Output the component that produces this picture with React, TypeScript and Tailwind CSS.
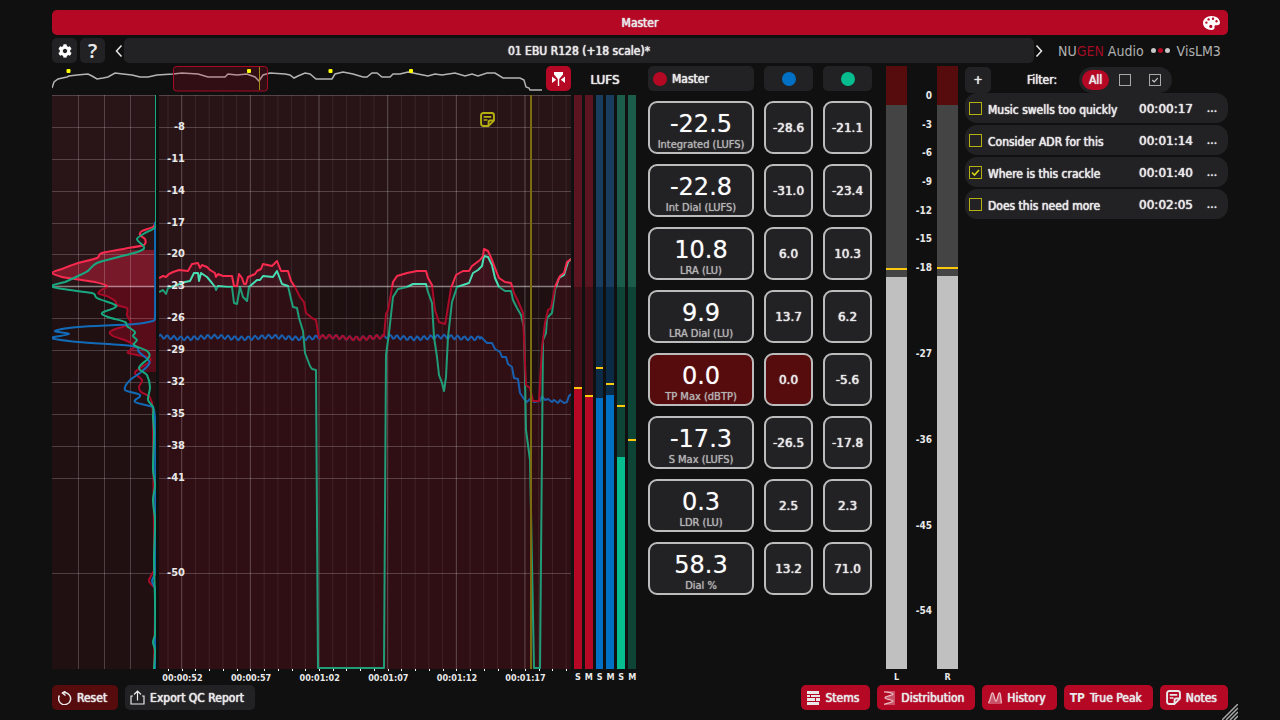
import { useState } from "react";
import { FaCog } from "react-icons/fa";

type Point = [number, number];

const MIN_LU = -59;
const MAX_LU = -5;
const CHART_TOP = 95;
const CHART_HEIGHT = 574;
const TARGET_Y = 287;

const LU_TICKS = [-8, -11, -14, -17, -20, -23, -26, -29, -32, -35, -38, -41, -50];
const TP_TICKS = [0, -3, -6, -9, -12, -15, -18, -27, -36, -45, -54];
const TIMES = ["00:00:52", "00:00:57", "00:01:02", "00:01:07", "00:01:12", "00:01:17"];
const SECONDS = Array.from({ length: 30 }, (_, i) => 168 + i * 13.73);

const OVERVIEW: Point[] = [
  [52, 88], [54, 82], [58, 79], [67, 77], [69, 76], [77, 75], [88, 74], [92, 76], [97, 79], [103, 78],
  [108, 77], [115, 73], [123, 74], [132, 75], [140, 77], [148, 77], [157, 75], [173, 74], [182, 73],
  [198, 74], [208, 77], [225, 77], [228, 74], [237, 75], [247, 74], [255, 77], [259, 81], [263, 75],
  [270, 73], [285, 74], [290, 75], [294, 78], [298, 76], [305, 73], [310, 74], [316, 79], [332, 79],
  [335, 74], [343, 72], [353, 74], [363, 77], [367, 77], [372, 73], [377, 73], [382, 77], [390, 77],
  [393, 74], [400, 74], [408, 72], [418, 74], [428, 76], [435, 74], [442, 75], [455, 73], [465, 76],
  [472, 74], [478, 76], [487, 73], [495, 73], [503, 78], [520, 78], [524, 80], [526, 87], [529, 88],
  [530, 90], [542, 90],
];

const MASTER: Point[] = [
  [159, 278], [163, 276], [166, 277], [169, 274], [173, 272], [179, 270], [188, 271], [192, 264],
  [198, 263], [200, 268], [202, 265], [207, 267], [210, 270], [215, 273], [216, 277], [218, 274],
  [223, 276], [232, 276], [234, 286], [237, 286], [239, 274], [242, 278], [244, 284], [246, 284],
  [248, 277], [255, 274], [257, 271], [261, 269], [263, 264], [272, 266], [277, 261], [281, 271],
  [288, 271], [291, 281], [295, 287], [300, 297], [304, 302], [306, 313], [312, 318], [316, 320],
  [319, 338],
];

const MASTER_AFTER: Point[] = [
  [384, 336], [386, 314], [388, 310], [393, 282], [397, 276], [407, 273], [417, 271], [426, 271],
  [428, 278], [432, 285], [435, 310], [439, 322], [445, 324], [447, 313], [451, 288], [456, 275],
  [463, 271], [469, 271], [472, 266], [480, 260], [483, 256], [484, 249], [488, 251], [492, 260],
  [495, 268], [499, 278], [505, 282], [511, 283], [514, 293], [518, 301], [523, 313], [525, 363],
  [526, 385], [530, 388], [533, 401], [539, 401], [542, 347], [545, 323], [548, 310], [551, 308],
  [555, 287], [560, 276], [564, 273], [567, 262], [571, 259],
];

const DIALOG: Point[] = [
  [159, 292], [163, 290], [166, 294], [168, 288], [177, 285], [185, 282], [190, 281], [194, 273],
  [198, 273], [199, 281], [201, 273], [207, 277], [212, 283], [215, 287], [216, 290], [218, 286],
  [227, 287], [232, 287], [234, 303], [237, 304], [240, 287], [243, 297], [247, 301], [249, 287],
  [257, 280], [260, 280], [263, 276], [273, 277], [277, 271], [282, 284], [288, 286], [291, 299],
  [293, 307], [297, 308], [299, 318], [303, 331], [305, 353], [310, 366], [312, 369], [316, 370],
  [318, 668], [384, 668], [386, 355], [389, 333], [393, 297], [398, 289], [407, 287], [413, 284],
  [426, 284], [428, 292], [432, 303], [434, 337], [437, 357], [439, 375], [442, 383], [444, 391],
  [446, 377], [448, 337], [452, 302], [457, 287], [469, 283], [473, 273], [478, 270], [482, 266],
  [484, 256], [488, 257], [492, 265], [495, 278], [499, 287], [505, 291], [511, 291], [513, 300],
  [517, 308], [521, 315], [524, 327], [526, 430], [530, 460], [534, 668], [540, 668], [543, 340],
  [546, 333], [547, 318], [552, 313], [555, 290], [559, 278], [564, 275], [568, 262], [571, 259],
];

const EFFECTS_TAIL: Point[] = [
  [481, 337], [484, 340], [487, 343], [492, 343], [495, 349], [500, 352], [502, 357], [506, 357],
  [508, 364], [512, 367], [514, 378], [518, 379], [520, 393], [524, 399], [527, 402], [530, 399],
  [534, 402], [540, 401], [542, 396], [545, 400], [548, 399], [552, 402], [554, 400], [558, 403],
  [560, 400], [564, 403], [567, 402], [569, 396], [571, 394],
];

const DIST_MASTER: Point[] = [
  [156, 221], [153, 227], [142, 231], [140, 235], [145, 239], [144, 245], [128, 248], [102, 253],
  [97, 258], [78, 263], [62, 269], [52, 273], [62, 277], [75, 279], [95, 282], [107, 286], [100, 291],
  [99, 294], [107, 296], [115, 301], [117, 305], [127, 308], [127, 315], [130, 324], [111, 331],
  [113, 336], [125, 340], [135, 346], [128, 353], [147, 357], [150, 361], [140, 368], [135, 373],
  [142, 380], [139, 387], [141, 392], [149, 396], [152, 403], [153, 417], [153, 433], [154, 570],
  [150, 578], [149, 581], [151, 584], [155, 588], [154, 669],
];

const DIST_DIALOG: Point[] = [
  [156, 226], [153, 229], [145, 233], [137, 239], [144, 247], [140, 251], [122, 256], [97, 263],
  [88, 271], [78, 276], [65, 282], [52, 286], [63, 289], [92, 293], [97, 298], [115, 305], [114, 308],
  [102, 313], [108, 317], [125, 322], [127, 326], [135, 332], [133, 336], [137, 340], [134, 345],
  [147, 351], [149, 357], [139, 368], [147, 375], [150, 387], [148, 400], [153, 407], [153, 417],
  [154, 433], [153, 470], [155, 485], [153, 500], [155, 520], [154, 560], [155, 600], [155, 635],
  [153, 642], [155, 650], [154, 669],
];

const DIST_EFFECTS: Point[] = [
  [155, 222], [155, 317], [153, 321], [135, 324], [78, 327], [55, 331], [69, 334], [52, 338], [78, 342],
  [132, 346], [139, 352], [148, 360], [149, 364], [140, 373], [130, 380], [125, 390], [140, 395],
  [135, 402], [153, 407], [155, 430], [155, 574], [152, 581], [155, 588], [155, 669],
];

const METERS = [
  { name: "S", level: 389, peak: 388, on: "bg-[#b40824]", hi: "bg-[#5a1521]", lo: "bg-[#400f17]" },
  { name: "M", level: 397, peak: 396, on: "bg-[#b40824]", hi: "bg-[#5a1521]", lo: "bg-[#400f17]" },
  { name: "S", level: 398, peak: 368, on: "bg-[#0070c4]", hi: "bg-[#183d5e]", lo: "bg-[#0b2a45]" },
  { name: "M", level: 395, peak: 384, on: "bg-[#0070c4]", hi: "bg-[#183d5e]", lo: "bg-[#0b2a45]" },
  { name: "S", level: 457, peak: 406, on: "bg-[#06bd90]", hi: "bg-[#1c5c4a]", lo: "bg-[#0d4435]" },
  { name: "M", level: 669, peak: 440, on: "bg-[#06bd90]", hi: "bg-[#1c5c4a]", lo: "bg-[#0d4435]" },
];

const READINGS = [
  { label: "Integrated (LUFS)", values: ["-22.5", "-28.6", "-21.1"], over: 0 },
  { label: "Int Dial (LUFS)", values: ["-22.8", "-31.0", "-23.4"], over: 0 },
  { label: "LRA (LU)", values: ["10.8", "6.0", "10.3"], over: 0 },
  { label: "LRA Dial (LU)", values: ["9.9", "13.7", "6.2"], over: 0 },
  { label: "TP Max (dBTP)", values: ["0.0", "0.0", "-5.6"], over: 2 },
  { label: "S Max (LUFS)", values: ["-17.3", "-26.5", "-17.8"], over: 0 },
  { label: "LDR (LU)", values: ["0.3", "2.5", "2.3"], over: 0 },
  { label: "Dial %", values: ["58.3", "13.2", "71.0"], over: 0 },
];

const NOTES = [
  { text: "Music swells too quickly", time: "00:00:17", done: false },
  { text: "Consider ADR for this", time: "00:01:14", done: false },
  { text: "Where is this crackle", time: "00:01:40", done: true },
  { text: "Does this need more", time: "00:02:05", done: false },
];

function wave(from: number, to: number): Point[] {
  const out: Point[] = [];
  for (let x = from; x <= to; x += 1.5) {
    out.push([x, 337.5 + 2 * Math.sin(x * 0.93) + 0.9 * Math.sin(x * 0.11)]);
  }
  return out;
}

function line(points: Point[]) {
  return "M" + points.map(([x, y]) => `${x} ${y}`).join("L");
}

function curve(p: Point[]) {
  let d = `M${p[0][0]} ${p[0][1]}`;
  for (let i = 0; i < p.length - 1; i++) {
    const a = p[Math.max(i - 1, 0)];
    const b = p[i];
    const c = p[i + 1];
    const e = p[Math.min(i + 2, p.length - 1)];
    const dy = (c[1] - b[1]) / 3;
    const k = 1 / 6;
    d += `C${b[0] + (c[0] - a[0]) * k} ${b[1] + dy} ${c[0] - (e[0] - b[0]) * k} ${c[1] - dy} ${c[0]} ${c[1]}`;
  }
  return d;
}

const luY = (lu: number) => CHART_TOP + ((MAX_LU - lu) / (MAX_LU - MIN_LU)) * CHART_HEIGHT;
const percent = (y: number) => `${((y - CHART_TOP) / CHART_HEIGHT) * 100}%`;

const masterPoints = [...MASTER, ...wave(320, 383), ...MASTER_AFTER];
const effectsPoints = [...wave(159, 480), ...EFFECTS_TAIL];

function NoteIcon({ className }: { className: string }) {
  return (
    <svg viewBox="1 1 14 14" fill="none" stroke="currentColor" strokeWidth="1.800" strokeLinejoin="round" className={className}>
      <path d="M4 2h8a2 2 0 0 1 2 2v5l-5 5H4a2 2 0 0 1-2-2V4a2 2 0 0 1 2-2z" />
      <path d="M14 9h-3.500A1.500 1.500 0 0 0 9 10.500V14" />
      <path d="M4.500 5.500h7M4.500 8.500h3.500" strokeWidth="1.500" />
    </svg>
  );
}

function PaletteIcon() {
  return (
    <svg viewBox="0 0 17 14" fill="currentColor" fillRule="evenodd" className="h-[14px] w-[17px]">
      <path d="M8.500 0C13.200 0 17 2.800 17 6.500c0 1.600-1 2.700-2.600 2.700h-1.700c-1 0-1.500 0.800-1.200 1.600 0.600 1.700-0.600 3.200-3 3.200C3.800 14 0 11 0 7S3.800 0 8.500 0zM3.400 5.400a1.200 1.200 0 1 0 0 2.400 1.200 1.200 0 0 0 0-2.400zM5.600 2.200a1.200 1.200 0 1 0 0 2.400 1.200 1.200 0 0 0 0-2.400zM10 1.600a1.200 1.200 0 1 0 0 2.400 1.200 1.200 0 0 0 0-2.400zM13.500 4a1.200 1.200 0 1 0 0 2.400 1.200 1.200 0 0 0 0-2.400zM7.800 8.800a1.600 1.600 0 1 0 0 3.200 1.600 1.600 0 0 0 0-3.200z" />
    </svg>
  );
}

function Check({ className }: { className: string }) {
  return (
    <svg viewBox="0 0 13 13" fill="none" stroke="currentColor" className={className}>
      <path d="M3 6.500l2.500 2.500 4.500-5" strokeWidth="1.600" />
    </svg>
  );
}

function Overview() {
  return (
    <svg viewBox="52 66 491 28" preserveAspectRatio="none" className="h-7 min-w-0 flex-1">
      <path d={line(OVERVIEW)} fill="none" stroke="#b4b4b4" strokeWidth="1.500" vectorEffect="non-scaling-stroke" />
      <rect x="173.500" y="66.500" width="94" height="24.500" rx="3" fill="#b40824" fillOpacity="0.2" stroke="#a80a24" />
      <path d="M259.500 67v23" stroke="#a08a18" />
      {[68.5, 249, 330.5, 411].map((x) => (
        <rect key={x} x={x - 2} y="69" width="4" height="4" rx="1" fill="#ffff00" />
      ))}
    </svg>
  );
}

function GridRows({ from, to }: { from: number; to: number }) {
  return (
    <g>
      <path d={`M${from} 95.500H${to}`} stroke="#fff" strokeOpacity="0.2" />
      {LU_TICKS.map((lu) => (
        <path
          key={lu}
          d={`M${from} ${Math.round(luY(lu))}.500H${to}`}
          stroke="#fff"
          strokeOpacity={lu === -23 ? 0.45 : 0.2}
          strokeWidth={lu === -23 ? 1.5 : 1}
        />
      ))}
    </g>
  );
}

function DistributionChart() {
  return (
    <svg viewBox="52 95 104 574" preserveAspectRatio="none" className="h-full w-[104px]">
      <defs>
        <linearGradient id="distFill" gradientUnits="userSpaceOnUse" x1="0" y1="95" x2="0" y2="669">
          <stop offset="0.334" stopColor="#78192a" />
          <stop offset="0.334" stopColor="#580b19" />
        </linearGradient>
        <clipPath id="distBand">
          <rect x="52" y="250" width="104" height="122" />
        </clipPath>
      </defs>
      <rect x="52" y="95" width="104" height="192" fill="#291518" />
      <rect x="52" y="287" width="104" height="382" fill="#211012" />
      <path d={`${curve(DIST_MASTER)}L156 669L156 221Z`} fill="url(#distFill)" clipPath="url(#distBand)" />
      <path d="M78.500 95V669M104.500 95V669M130.500 95V669" stroke="#fff" strokeOpacity="0.2" />
      <GridRows from={52} to={156} />
      <g fill="none" strokeWidth="2">
        <path d={curve(DIST_MASTER)} stroke="url(#masterLine)" />
        <path d={curve(DIST_EFFECTS)} stroke="#126bb8" />
        <path d={curve(DIST_DIALOG)} stroke="#17a880" />
        <path d="M155.500 95V226" stroke="#17a880" strokeWidth="1" />
      </g>
    </svg>
  );
}

function HistoryChart() {
  return (
    <svg viewBox="159 95 412 574" preserveAspectRatio="none" className="h-full w-full">
      <defs>
        <linearGradient id="masterLine" gradientUnits="userSpaceOnUse" x1="0" y1="95" x2="0" y2="669">
          <stop offset="0.334" stopColor="#f82a4e" />
          <stop offset="0.334" stopColor="#a80a28" />
        </linearGradient>
        <linearGradient id="dialogLine" gradientUnits="userSpaceOnUse" x1="0" y1="95" x2="0" y2="669">
          <stop offset="0.334" stopColor="#48dcb2" />
          <stop offset="0.334" stopColor="#209c78" />
        </linearGradient>
        <linearGradient id="historyFill" gradientUnits="userSpaceOnUse" x1="0" y1="95" x2="0" y2="669">
          <stop offset="0.334" stopColor="#3c131c" />
          <stop offset="0.334" stopColor="#2f0f14" />
        </linearGradient>
      </defs>
      <rect x="159" y="95" width="412" height="192" fill="#281417" />
      <rect x="159" y="287" width="412" height="382" fill="#1e0f11" />
      <path d={`${line(masterPoints)}L571 669L159 669Z`} fill="url(#historyFill)" />
      {SECONDS.map((x, i) => (
        <path key={i} d={`M${x} 95V669`} stroke="#fff" strokeOpacity={i % 5 === 1 ? 0.25 : 0.08} />
      ))}
      <GridRows from={159} to={571} />
      <g fill="none" strokeWidth="2" strokeLinejoin="round">
        <path d={line(effectsPoints)} stroke="#1a5fae" />
        <path d={line(DIALOG)} stroke="url(#dialogLine)" />
        <path d={line(masterPoints)} stroke="url(#masterLine)" />
      </g>
      <path d="M531 95V669" stroke="#7c6c10" strokeWidth="2" />
    </svg>
  );
}

function LoudnessMeter({ meter }: { meter: (typeof METERS)[number] }) {
  return (
    <div className="flex min-w-0 flex-1 flex-col">
      <div className={`relative flex-1 ${meter.lo}`}>
        <div className={`absolute inset-x-0 top-0 ${meter.hi}`} style={{ height: percent(TARGET_Y) }} />
        <div className={`absolute inset-x-0 bottom-0 ${meter.on}`} style={{ top: percent(meter.level) }} />
        <div className="absolute inset-x-0 h-0.5 bg-[#fcc80c]" style={{ top: percent(meter.peak - 1) }} />
      </div>
      <span className="h-4 text-center text-[9px] leading-4 font-bold text-shadow-none">{meter.name}</span>
    </div>
  );
}

function TruePeakMeter({ name, level, peak }: { name: string; level: number; peak: number }) {
  const top = (y: number) => `${((y - 66) / 603) * 100}%`;
  return (
    <div className="flex w-[21px] flex-col">
      <div className="relative flex-1 bg-[#444444]">
        <div className="absolute inset-x-0 top-0 bg-[#560b0c]" style={{ height: top(105) }} />
        <div className="absolute inset-x-0 bottom-0 bg-[#c0c0c0]" style={{ top: top(level) }} />
        <div className="absolute inset-x-0 h-0.5 bg-[#fcc80c]" style={{ top: top(peak) }} />
      </div>
      <span className="h-4 text-center text-[9px] leading-4 font-bold text-shadow-none">{name}</span>
    </div>
  );
}

function NoteRow({ note }: { note: (typeof NOTES)[number] }) {
  const [done, setDone] = useState(note.done);
  return (
    <li className="flex h-[30px] items-center rounded-xl bg-[#222224] pr-[10px] pl-1">
      <label className="flex min-w-0 flex-1 items-center gap-[6px]">
        <span className="relative size-[13px] shrink-0">
          <input
            type="checkbox"
            checked={done}
            onChange={(e) => setDone(e.target.checked)}
            className="block size-[13px] appearance-none border border-[#b4b010]"
          />
          {done && <Check className="pointer-events-none absolute inset-0 text-[#d8d414]" />}
        </span>
        <span className="pt-[3px] whitespace-nowrap">{note.text}</span>
      </label>
      <span className="pt-px font-['DejaVu_Sans']">{note.time}</span>
      <button type="button" aria-label="More" className="ml-[13px] w-3">
        ...
      </button>
    </li>
  );
}

function ViewButton({ children }: { children: React.ReactNode }) {
  return (
    <button type="button" className="flex h-[25px] items-center gap-[5px] rounded-[5px] bg-[#b40824] pr-[11px] pl-[6px]">
      {children}
    </button>
  );
}

export default function App() {
  const [filter, setFilter] = useState("all");

  return (
    <div className="relative flex min-h-screen flex-col gap-[3px] bg-[#101010] px-[52px] py-[10px] font-['DejaVu_Sans_Condensed','DejaVu_Sans',sans-serif] text-[12px] leading-4 text-[#e8e8e8] [text-shadow:0_0_1px_currentColor,0_0_1px_currentColor] [&_button]:[text-shadow:inherit]">
      <header className="relative flex h-[25px] items-center justify-center rounded-[5px] bg-[#b40824]">
        Master
        <button type="button" aria-label="Theme" className="absolute right-2 text-white">
          <PaletteIcon />
        </button>
      </header>

      <div className="flex h-[25px] items-center">
        <button type="button" aria-label="Settings" className="mr-[3px] flex size-[25px] items-center justify-center rounded-[5px] bg-[#222224] text-white">
          <FaCog className="size-[14px]" />
        </button>
        <button type="button" aria-label="Help" className="flex size-[25px] items-center justify-center rounded-[5px] bg-[#222224] font-['Noto_Sans'] text-[20px] font-semibold">
          <span className="text-shadow-none">?</span>
        </button>
        <button type="button" aria-label="Previous preset" className="flex w-[19px] justify-end pr-px">
          <svg viewBox="0 0 8 12" fill="none" stroke="currentColor" strokeWidth="1.500" className="h-3 w-2">
            <path d="M6.500 0.500L1.500 6l5 5.500" />
          </svg>
        </button>
        <button type="button" className="h-[25px] flex-1 rounded-[5px] bg-[#222224]">
          01 EBU R128 (+18 scale)*
        </button>
        <button type="button" aria-label="Next preset" className="flex w-6 pl-px">
          <svg viewBox="0 0 8 12" fill="none" stroke="currentColor" strokeWidth="1.500" className="h-3 w-2">
            <path d="M1.500 0.500l5 5.500-5 5.500" />
          </svg>
        </button>
        <div className="flex w-[170px] items-center text-[14px] text-[#b0b0b0] text-shadow-none">
          NU<span className="text-[#a00c24]">GEN</span>&nbsp;Audio
          <span className="mx-[7px] flex gap-0.5">
            <i className="size-[5px] rounded-full bg-[#c8c8c8]" />
            <i className="size-[5px] rounded-full bg-[#b40824]" />
            <i className="size-[5px] rounded-full bg-[#c8c8c8]" />
          </span>
          VisLM3
        </div>
      </div>

      <main className="flex flex-1">
        <section className="flex min-w-0 flex-1 flex-col">
          <div className="flex gap-[3px] pb-px">
            <Overview />
            <button type="button" aria-label="Follow playhead" className="flex size-[25px] items-center justify-center rounded-[5px] bg-[#b40824] text-white">
              <svg viewBox="0 0 13 14" fill="currentColor" className="h-[14px] w-[13px]">
                <path d="M2 0h9v2.500L7.200 7v7H5.800V7L2 2.500z" />
                <path d="M0 4.500L4.200 7.700 0 11zM13 4.500L8.800 7.700 13 11z" />
              </svg>
            </button>
          </div>
          <div className="flex flex-1 gap-[3px]">
            <div className="flex flex-col pb-4">
              <div className="flex-1 basis-0">
                <DistributionChart />
              </div>
            </div>
            <div className="flex min-w-0 flex-1 flex-col font-bold text-shadow-none">
              <div className="relative flex-1 basis-0 text-[11px]">
                <div className="absolute inset-0">
                  <HistoryChart />
                </div>
                {LU_TICKS.map((lu) => (
                  <span key={lu} className="absolute left-0 w-[26px] -translate-y-1/2 text-right" style={{ top: percent(luY(lu)) }}>
                    {lu}
                  </span>
                ))}
                <NoteIcon className="absolute top-[3%] left-[78%] size-[15px] text-[#b4b010]" />
              </div>
              <div className="relative h-4 text-[9px]">
                {SECONDS.map((x, i) => (
                  <i key={i} className="absolute top-0 h-0.5 w-px bg-white" style={{ left: `${((x - 159) / 412) * 100}%` }} />
                ))}
                {TIMES.map((time, i) => (
                  <span key={time} className="absolute top-px -translate-x-1/2" style={{ left: `${((182.5 + i * 68.6 - 159) / 412) * 100}%` }}>
                    {time}
                  </span>
                ))}
              </div>
            </div>
          </div>
        </section>

        <section className="ml-[3px] flex w-[62px] flex-col">
          <h2 className="h-[29px] text-center font-['DejaVu_Sans'] leading-[29px]">LUFS</h2>
          <div className="flex flex-1 gap-[3px]">
            {METERS.map((meter, i) => (
              <LoudnessMeter key={i} meter={meter} />
            ))}
          </div>
        </section>

        <section className="ml-3 grid w-[224px] grid-cols-[106px_49px_49px] content-start gap-[10px]">
          <button type="button" className="flex h-[25px] items-center gap-[5px] rounded-[5px] bg-[#222224] px-[5px]">
            <i className="size-[14px] rounded-full bg-[#b40824]" />
            Master
          </button>
          <button type="button" aria-label="Effects stem" className="flex h-[25px] items-center justify-center rounded-[5px] bg-[#222224]">
            <i className="size-[14px] rounded-full bg-[#0070c4]" />
          </button>
          <button type="button" aria-label="Dialog stem" className="flex h-[25px] items-center justify-center rounded-[5px] bg-[#222224]">
            <i className="size-[14px] rounded-full bg-[#06bd90]" />
          </button>
          {READINGS.map(({ label, values, over }) =>
            values.map((value, i) => (
              <div
                key={label + i}
                className={`flex h-[53px] flex-col items-center justify-center rounded-[9px] border-2 border-[#bcbcbc] font-['DejaVu_Sans'] ${
                  i < over ? "bg-[#560b0c]" : "bg-[#222224]"
                }`}
              >
                {i === 0 ? (
                  <>
                    <span className="pt-[6px] text-[24px] leading-7 text-white [text-shadow:0_0_1px_#ffffff80]">{value}</span>
                    <span className="font-['DejaVu_Sans_Condensed','DejaVu_Sans'] text-[11px] leading-[14px] text-[#b4b4b4] [text-shadow:0_0_1px_currentColor]">
                      {label}
                    </span>
                  </>
                ) : (
                  value
                )}
              </div>
            )),
          )}
        </section>

        <section className="ml-[14px] flex w-[72px]">
          <TruePeakMeter name="L" level={277} peak={268} />
          <div className="flex flex-1 flex-col pb-4">
            <div className="relative flex-1 text-[10px] font-bold text-shadow-none">
              {TP_TICKS.map((db) => (
                <span key={db} className="absolute right-[5px] -translate-y-1/2" style={{ top: `${((30 - db * 9.545) / 603) * 100}%` }}>
                  {db}
                </span>
              ))}
            </div>
          </div>
          <TruePeakMeter name="R" level={276} peak={267} />
        </section>

        <section className="ml-[7px] w-[263px]">
          <div className="flex h-[27px] items-center">
            <button type="button" aria-label="Add note" className="size-[26px] rounded-[5px] bg-[#222224]">
              +
            </button>
            <span className="ml-9">Filter:</span>
            <div className="ml-[22px] flex h-[26px] items-center rounded-full bg-[#222224] px-[3px]">
              <button
                type="button"
                aria-pressed={filter === "all"}
                onClick={() => setFilter("all")}
                className="h-5 w-[27px] rounded-full bg-[#b40824]"
              >
                All
              </button>
              <button type="button" aria-label="Open notes" onClick={() => setFilter("open")} className="flex h-5 w-8 items-center justify-center">
                <i className="size-3 border border-[#a8a8a8]" />
              </button>
              <button type="button" aria-label="Done notes" onClick={() => setFilter("done")} className="flex h-5 w-7 items-center justify-center">
                <i className="relative size-3 border border-[#a8a8a8]">
                  <Check className="absolute inset-0 text-[#c8c8c8]" />
                </i>
              </button>
            </div>
          </div>
          <ul className="flex flex-col gap-0.5">
            {NOTES.filter((n) => filter === "all" || n.done === (filter === "done")).map((note) => (
              <NoteRow key={note.time} note={note} />
            ))}
          </ul>
        </section>
      </main>

      <footer className="mt-[-3px] flex items-center gap-[7px]">
        <button type="button" className="flex h-[25px] items-center gap-[5px] rounded-[5px] bg-[#560b0c] pr-[11px] pl-[6px]">
          <svg viewBox="0 0 14 14" fill="none" stroke="currentColor" strokeWidth="1.500" className="size-[14px]">
            <path d="M1.500 4.500A6 6 0 1 0 8 1.800H4" />
            <path d="M7.500 0L4.500 2l3 2.500" />
          </svg>
          Reset
        </button>
        <button type="button" className="mr-auto flex h-[25px] items-center gap-[5px] rounded-[5px] bg-[#222224] pr-[11px] pl-[5px]">
          <svg viewBox="0 0 15 15" fill="none" stroke="currentColor" strokeWidth="1.200" className="size-[15px]">
            <path d="M3 6H1v8h13V6h-2M7.500 10.500V1M4 4.500L7.500 1 11 4.500" />
          </svg>
          Export QC Report
        </button>
        <ViewButton>
          <svg viewBox="0 0 13 14" fill="currentColor" className="h-[14px] w-[13px]">
            <path d="M0 0h12v3H0zM0 4h3v2H0zM4 4h9v2H4zM0 7h8v3H0zM9 7h4v3H9zM0 11h12v3H0z" />
          </svg>
          Stems
        </ViewButton>
        <ViewButton>
          <svg viewBox="0 0 13 14" className="h-[14px] w-[13px]">
            <path d="M1 0h11v14H1l9-4-8-3.500L10 3z" fill="#fff" fillOpacity="0.3" />
            <path d="M1 0.800C4 1 10 2 10 3.200S2 5 2 6.800s8 1.700 8 3.200-6 2-9 3.300" fill="none" stroke="#e8b8c0" strokeWidth="1.300" />
          </svg>
          Distribution
        </ViewButton>
        <ViewButton>
          <svg viewBox="0 0 14 12" className="h-3 w-[14px]">
            <path d="M0 12C3 8 3 1 4.500 1S6.500 9 8 9s2-8 3.500-8 1 6 2.500 11z" fill="#fff" fillOpacity="0.3" />
            <path d="M0.500 11C3 7 3 1 4.500 1S6.500 9 8 9s2-8 3.500-8 1 6 2 10" fill="none" stroke="#e8b8c0" strokeWidth="1.300" />
          </svg>
          History
        </ViewButton>
        <ViewButton>
          <span className="font-bold text-shadow-none">TP</span>
          True Peak
        </ViewButton>
        <ViewButton>
          <NoteIcon className="size-[15px]" />
          Notes
        </ViewButton>
      </footer>

      <svg viewBox="0 0 16 16" stroke="#a8a8a8" strokeWidth="1.500" className="absolute right-[42px] bottom-0 size-4">
        <path d="M0 16L16 0M4 16L16 4M8 16l8-8M12 16l4-4" />
      </svg>
    </div>
  );
}
